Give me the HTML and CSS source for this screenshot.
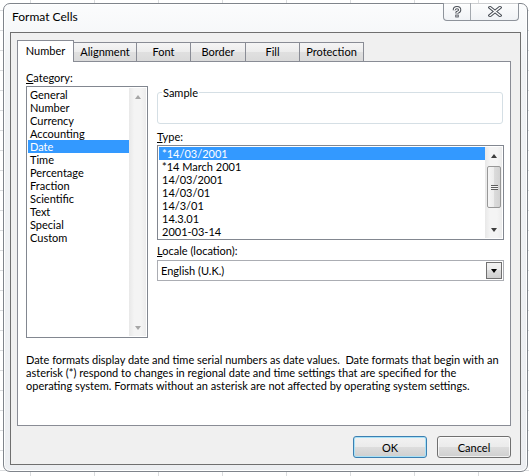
FILE: index.html
```html
<!DOCTYPE html>
<html>
<head>
<meta charset="utf-8">
<title>Format Cells</title>
<link rel="stylesheet" href="styles.css">
</head>
<body>
<div class="window">
  <div class="caption">
    <span class="title">Format Cells</span>
    <div class="capbtns">
      <div class="capbtn help">
        <svg width="10" height="12" viewBox="0 0 10 12">
          <path d="M2.3 4.2 Q2.3 1.6 5 1.6 Q7.7 1.6 7.7 4 Q7.7 5.6 5 6.6 L5 7.6" fill="none" stroke="#4a4f57" stroke-width="3.2" stroke-linejoin="round"/>
          <rect x="3.3" y="8.6" width="3.4" height="2.8" fill="#4a4f57"/>
          <path d="M2.3 4.2 Q2.3 1.6 5 1.6 Q7.7 1.6 7.7 4 Q7.7 5.6 5 6.6 L5 7.6" fill="none" stroke="#fff" stroke-width="1.2" stroke-linejoin="round"/>
          <rect x="4.3" y="9.4" width="1.4" height="1.2" fill="#fff"/>
        </svg>
      </div>
      <div class="capbtn close">
        <svg width="14" height="11" viewBox="0 0 14 11">
          <path d="M2 1.5 L12 9.5 M12 1.5 L2 9.5" stroke="#4a4f57" stroke-width="3.4" stroke-linecap="square"/>
          <path d="M2 1.5 L12 9.5 M12 1.5 L2 9.5" stroke="#fff" stroke-width="1.3" stroke-linecap="square"/>
        </svg>
      </div>
    </div>
  </div>
  <div class="client">
    <div class="tabs">
      <div class="tab active t-number">Number</div>
      <div class="tab t-align">Alignment</div>
      <div class="tab t-font">Font</div>
      <div class="tab t-border">Border</div>
      <div class="tab t-fill">Fill</div>
      <div class="tab t-prot">Protection</div>
    </div>
    <div class="panel">
      <div class="top">
        <div class="leftcol">
          <div class="label"><u>C</u>ategory:</div>
          <div class="listbox catlist">
            <div class="items">
              <div class="item">General</div>
              <div class="item">Number</div>
              <div class="item">Currency</div>
              <div class="item">Accounting</div>
              <div class="item selected">Date</div>
              <div class="item">Time</div>
              <div class="item">Percentage</div>
              <div class="item">Fraction</div>
              <div class="item">Scientific</div>
              <div class="item">Text</div>
              <div class="item">Special</div>
              <div class="item">Custom</div>
            </div>
            <div class="vscroll disabled">
              <div class="sbtn"><span class="arrow up"></span></div>
              <div class="strack"></div>
              <div class="sbtn"><span class="arrow down"></span></div>
            </div>
          </div>
        </div>
        <div class="rightcol">
          <fieldset class="sample"><legend>Sample</legend></fieldset>
          <div class="label type-label"><u>T</u>ype:</div>
          <div class="listbox typelist">
            <div class="items">
              <div class="item selected">*14/03/2001</div>
              <div class="item">*14 March 2001</div>
              <div class="item">14/03/2001</div>
              <div class="item">14/03/01</div>
              <div class="item">14/3/01</div>
              <div class="item">14.3.01</div>
              <div class="item">2001-03-14</div>
            </div>
            <div class="vscroll">
              <div class="sbtn"><span class="arrow up"></span></div>
              <div class="strack">
                <div class="thumb"><span class="grip"></span></div>
              </div>
              <div class="sbtn"><span class="arrow down"></span></div>
            </div>
          </div>
          <div class="label locale-label"><u>L</u>ocale (location):</div>
          <div class="select">
            <span class="seltext">English (U.K.)</span>
            <div class="ddbtn"><span class="arrow down dark"></span></div>
          </div>
        </div>
      </div>
      <p class="desc">Date formats display date and time serial numbers as date values.&nbsp; Date formats that begin with an<br>asterisk (*) respond to changes in regional date and time settings that are specified for the<br>operating system. Formats without an asterisk are not affected by operating system settings.</p>
    </div>
    <div class="buttons">
      <button class="btn default">OK</button>
      <button class="btn">Cancel</button>
    </div>
  </div>
</div>
</body>
</html>
```

FILE: styles.css
```css
* { box-sizing: border-box; }

html, body { margin: 0; height: 100%; }

body {
  padding: 3px 0 0 3px;
  overflow: hidden;
  background-color: #fff;
  background-image:
    linear-gradient(to right, #dadcde 1px, transparent 1px),
    linear-gradient(to bottom, #dadcde 1px, transparent 1px);
  background-size: 64px 100%, 100% 20px;
  background-position: 30px 0, 0 10px;
  font-family: Lato, "Noto Sans", sans-serif;
  font-size: 11px;
  color: #000;
}

.window {
  width: 525px;
  height: 469px;
  border: 1px solid #7f848b;
  border-radius: 7px;
  padding: 0 6px 6px 6px;
  background: linear-gradient(#fbfcfd, #f1f3f5 60px, #eceef1);
  box-shadow: inset 0 0 0 1px rgba(255,255,255,0.9);
}

.caption {
  height: 28px;
  display: flex;
  justify-content: space-between;
  align-items: flex-start;
  padding-left: 2px;
}

.title {
  font-size: 12px;
  line-height: 26px;
  color: #000;
}

.capbtns {
  display: flex;
  margin-top: -1px;
  margin-right: 2px;
  height: 18px;
  border: 1px solid #8e939b;
  border-top: 0;
  border-radius: 0 0 4px 4px;
  background: linear-gradient(rgba(255,255,255,0.6), rgba(235,238,242,0.6));
}

.capbtn {
  display: flex;
  align-items: center;
  justify-content: center;
}

.capbtn.help { width: 27px; border-right: 1px solid #a3a8ae; }
.capbtn.close { width: 47px; }

.client {
  height: 433px;
  border: 1px solid #6f6f6f;
  background: #f0f0f0;
  padding-top: 7px;
}

.tabs {
  display: flex;
  align-items: flex-end;
  height: 21px;
  margin-left: 6px;
  position: relative;
  z-index: 2;
}

.tab {
  height: 19px;
  border: 1px solid #898c95;
  border-bottom: 0;
  margin-left: -1px;
  background: linear-gradient(#f5f5f5, #ececec 50%, #e0e0e0 50%, #dadada);
  text-align: center;
  line-height: 17px;
}

.tab.active {
  height: 22px;
  margin-left: 0;
  margin-bottom: -1px;
  background: #fff;
  line-height: 20px;
  position: relative;
  z-index: 3;
}

.t-number { width: 57px; }
.t-align { width: 64px; }
.t-font { width: 55px; }
.t-border { width: 56px; }
.t-fill { width: 55px; }
.t-prot { width: 65px; }

.panel {
  height: 365px;
  margin: 0 9px 0 6px;
  border: 1px solid #898c95;
  background: #fff;
  padding: 9px 6px 0 8px;
}

.top {
  display: flex;
  gap: 9px;
}

.leftcol { width: 122px; }
.rightcol { width: 347px; }

.label {
  height: 13px;
  line-height: 13px;
  white-space: nowrap;
}

.listbox {
  display: flex;
  border: 1px solid #828790;
  padding: 1px;
  background: #fff;
}

.catlist {
  margin-top: 2px;
  height: 252px;
}

.typelist {
  margin-top: 2px;
  height: 95px;
}

.items { flex: 1; }

.item {
  height: 13px;
  line-height: 13px;
  padding-left: 2px;
  white-space: nowrap;
}

.typelist .item { padding-left: 3px; }

.item.selected {
  background: #3399ff;
  color: #fff;
}

.vscroll {
  width: 17px;
  display: flex;
  flex-direction: column;
  background: linear-gradient(to right, #e8e8e8, #f4f4f4 30%, #f4f4f4 70%, #ececec);
}

.sbtn {
  height: 17px;
  display: flex;
  align-items: center;
  justify-content: center;
}

.strack {
  flex: 1;
  padding-top: 2px;
}

.arrow {
  width: 0;
  height: 0;
  border-left: 3.5px solid transparent;
  border-right: 3.5px solid transparent;
}

.arrow.up { border-bottom: 4px solid #3d3d3d; }
.arrow.down { border-top: 4px solid #3d3d3d; }

.vscroll.disabled .arrow.up { border-bottom-color: #a6a6a6; }
.vscroll.disabled .arrow.down { border-top-color: #a6a6a6; }

.thumb {
  width: 14px;
  height: 42px;
  margin-left: 2px;
  border: 1px solid #979797;
  border-radius: 2px;
  background: linear-gradient(to right, #f6f6f6, #ececec 50%, #dcdcdc 50%, #d2d2d2);
  display: flex;
  align-items: center;
  justify-content: center;
}

.grip {
  width: 7px;
  height: 5px;
  background: repeating-linear-gradient(#5f5f5f 0 1px, #f4f4f4 1px 2px);
}

.sample {
  margin: 0;
  margin-top: 15px;
  height: 38px;
  width: 346px;
  padding: 0 4px;
  border: 1px solid #d5dfe5;
  border-radius: 3px;
  min-width: 0;
}

.sample legend {
  padding: 0 1px;
  line-height: 13px;
  font-size: 11px;
}

.type-label { margin-top: 6px; }
.locale-label { margin-top: 4px; }

.select {
  margin-top: 3px;
  height: 21px;
  border: 1px solid #abadb3;
  display: flex;
  align-items: center;
  justify-content: space-between;
  padding: 1px;
}

.seltext { padding-left: 2px; }

.ddbtn {
  width: 16px;
  height: 17px;
  border: 1px solid #707070;
  background: linear-gradient(#f2f2f2, #ebebeb 50%, #dddddd 50%, #cfcfcf);
  display: flex;
  align-items: center;
  justify-content: center;
}

.arrow.dark { border-top-color: #000; }

.desc {
  margin: 15px 0 0 0;
  line-height: 13px;
  white-space: nowrap;
}

.buttons {
  display: flex;
  justify-content: flex-end;
  gap: 10px;
  margin: 10px 9px 0 0;
}

.btn {
  width: 74px;
  height: 22px;
  border: 1px solid #707070;
  border-radius: 3px;
  background: linear-gradient(#f2f2f2, #ebebeb 50%, #dddddd 50%, #cfcfcf);
  font-family: Lato, "Noto Sans", sans-serif;
  font-size: 11px;
  color: #000;
  padding: 0;
  box-shadow: inset 0 0 0 1px rgba(255,255,255,0.7);
}

.btn.default {
  border-color: #3c7fb1;
  box-shadow: inset 0 0 0 1px #a8e1f7;
}
```
